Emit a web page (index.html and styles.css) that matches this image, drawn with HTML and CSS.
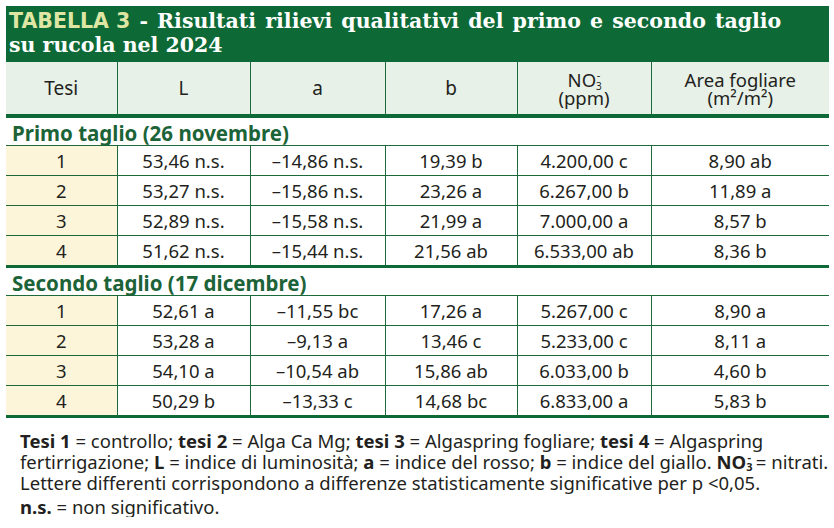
FILE: index.html
```html
<!DOCTYPE html>
<html lang="it">
<head>
<meta charset="utf-8">
<title>Tabella 3</title>
<link rel="stylesheet" href="styles.css">
</head>
<body>
<div class="panel">
  <div class="title"><span class="line1"><span class="tag">TABELLA 3</span> - Risultati rilievi qualitativi del primo e secondo taglio</span><br><span class="line2">su rucola nel 2024</span></div>
  <table class="data">
    <colgroup>
      <col class="c1"><col class="c2"><col class="c3"><col class="c4"><col class="c5"><col class="c6">
    </colgroup>
    <thead>
      <tr class="head">
        <th>Tesi</th>
        <th>L</th>
        <th>a</th>
        <th>b</th>
        <th class="two">NO<sub>3</sub><sup>-</sup><br>(ppm)</th>
        <th class="two">Area fogliare<br>(m²/m²)</th>
      </tr>
    </thead>
    <tbody>
      <tr class="section"><td colspan="6">Primo taglio (26 novembre)</td></tr>
      <tr><td class="tesi">1</td><td>53,46 n.s.</td><td>–14,86 n.s.</td><td>19,39 b</td><td>4.200,00 c</td><td>8,90 ab</td></tr>
      <tr><td class="tesi">2</td><td>53,27 n.s.</td><td>–15,86 n.s.</td><td>23,26 a</td><td>6.267,00 b</td><td>11,89 a</td></tr>
      <tr><td class="tesi">3</td><td>52,89 n.s.</td><td>–15,58 n.s.</td><td>21,99 a</td><td>7.000,00 a</td><td>8,57 b</td></tr>
      <tr class="last"><td class="tesi">4</td><td>51,62 n.s.</td><td>–15,44 n.s.</td><td>21,56 ab</td><td>6.533,00 ab</td><td>8,36 b</td></tr>
      <tr class="section"><td colspan="6">Secondo taglio (17 dicembre)</td></tr>
      <tr><td class="tesi">1</td><td>52,61 a</td><td>–11,55 bc</td><td>17,26 a</td><td>5.267,00 c</td><td>8,90 a</td></tr>
      <tr><td class="tesi">2</td><td>53,28 a</td><td>–9,13 a</td><td>13,46 c</td><td>5.233,00 c</td><td>8,11 a</td></tr>
      <tr><td class="tesi">3</td><td>54,10 a</td><td>–10,54 ab</td><td>15,86 ab</td><td>6.033,00 b</td><td>4,60 b</td></tr>
      <tr class="last"><td class="tesi">4</td><td>50,29 b</td><td>–13,33 c</td><td>14,68 bc</td><td>6.833,00 a</td><td>5,83 b</td></tr>
    </tbody>
  </table>
  <div class="note">
    <p class="note-main"><b>Tesi 1</b> = controllo; <b>tesi 2</b> = Alga Ca Mg; <b>tesi 3</b> = Algaspring fogliare; <b>tesi 4</b> = Algaspring<br>fertirrigazione; <b>L</b> = indice di luminosità; <b>a</b> = indice del rosso; <b>b</b> = indice del giallo. <b>NO<sub>3</sub><sup>-</sup></b> = nitrati.<br>Lettere differenti corrispondono a differenze statisticamente significative per p &lt;0,05.</p>
    <p class="note-last"><b>n.s.</b> = non significativo.</p>
  </div>
</div>
</body>
</html>
```
FILE: styles.css
```css
html, body {
  margin: 0;
  padding: 0;
  background: #ffffff;
}

.panel {
  width: 823px;
  margin: 6px 0 0 6px;
}

.title {
  background: #0d6a36;
  color: #ffffff;
  font-family: "DejaVu Serif", serif;
  font-weight: bold;
  font-size: 20.5px;
  line-height: 24px;
  padding: 3px 3px 5px 3px;
  height: 48px;
  white-space: nowrap;
}

.line1 {
  word-spacing: 2px;
}

.tag {
  font-family: "DejaVu Sans", "Liberation Sans", sans-serif;
  font-weight: bold;
  color: #dfe6a4;
  font-size: 20.5px;
  word-spacing: 0;
}

.data {
  width: 823px;
  border-collapse: collapse;
  table-layout: fixed;
  font-family: "Noto Sans", "Liberation Sans", sans-serif;
  color: #231f20;
}

.c1 { width: 111px; }
.c2 { width: 133px; }
.c3 { width: 135px; }
.c4 { width: 132px; }
.c5 { width: 134px; }
.c6 { width: 178px; }

.head th {
  background: #e7f1e8;
  font-weight: normal;
  font-size: 19px;
  height: 51px;
  padding: 0;
  line-height: 18px;
  border-left: 1px solid #1c6a3a;
  border-bottom: 4px solid #0d6a36;
  vertical-align: middle;
}

.head th:first-child {
  border-left: none;
}

.head th.two {
  font-size: 18.5px;
  line-height: 18px;
  padding-top: 1px;
}

.head sub {
  font-size: 10px;
  vertical-align: -3px;
  line-height: 0;
}

.head sup {
  font-size: 11px;
  vertical-align: 8px;
  line-height: 0;
  margin-left: -5px;
}

.data tbody td {
  font-size: 18.5px;
  text-align: center;
  height: 29px;
  padding: 0;
  line-height: 22px;
  border-left: 1px solid #1c6a3a;
  border-bottom: 1px solid #1c6a3a;
}

.data tbody tr.section td {
  font-family: "Noto Sans", "Liberation Sans", sans-serif;
  font-weight: bold;
  font-size: 20.5px;
  color: #1c6338;
  text-align: left;
  padding: 0 0 0 6px;
  height: 27px;
  line-height: 24px;
  vertical-align: bottom;
  border-left: none;
  border-bottom: 1px solid #1c6a3a;
}

.data tbody td.tesi {
  border-left: none;
  background: #fdf5d9;
}

.data tbody tr.last td {
  border-bottom: 3px solid #0d6a36;
}

.note {
  margin: 12px 0 0 14px;
  font-family: "Noto Sans", "Liberation Sans", sans-serif;
  font-size: 18.5px;
  line-height: 21px;
  color: #231f20;
  white-space: nowrap;
}

.note-main {
  margin: 0;
}

.note-last {
  margin: 3px 0 0 0;
}

.note b {
  font-weight: bold;
}

.note sub {
  font-size: 11px;
  vertical-align: -2px;
  line-height: 0;
}

.note sup {
  font-size: 11px;
  vertical-align: 8px;
  line-height: 0;
  margin-left: -5px;
}
```
